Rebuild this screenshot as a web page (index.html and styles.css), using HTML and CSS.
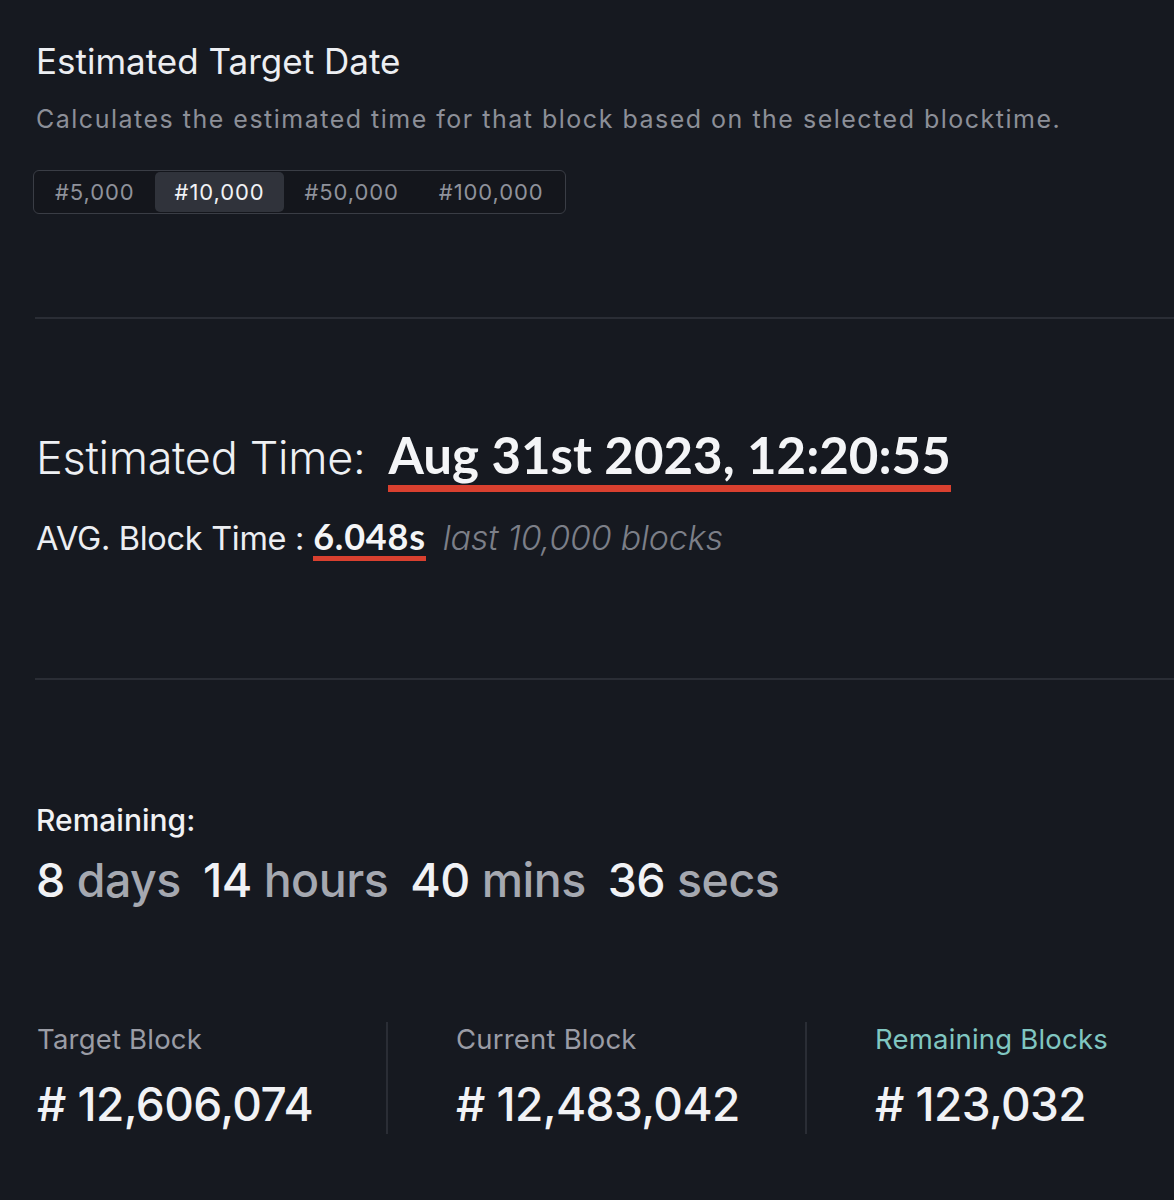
FILE: index.html
```html
<!DOCTYPE html>
<html lang="en">
<head>
<meta charset="utf-8">
<title>Estimated Target Date</title>
<link rel="stylesheet" href="styles.css">
</head>
<body>
<main class="page">
  <section class="intro">
    <h1 class="title">Estimated Target Date</h1>
    <p class="subtitle">Calculates the estimated time for that block based on the selected blocktime.</p>
    <div class="segmented">
      <button class="seg">#5,000</button>
      <button class="seg active">#10,000</button>
      <button class="seg">#50,000</button>
      <button class="seg">#100,000</button>
    </div>
  </section>

  <hr class="divider">

  <section class="estimate">
    <div class="est-line">
      <span class="est-label">Estimated Time:</span>
      <span class="est-date">Aug 31st 2023, 12:20:55</span>
    </div>
    <div class="avg-line">
      <span class="avg-label">AVG. Block Time :</span>
      <span class="avg-value">6.048s</span>
      <span class="avg-note">last 10,000 blocks</span>
    </div>
  </section>

  <hr class="divider">

  <section class="remaining">
    <div class="rem-label">Remaining:</div>
    <div class="rem-values">
      <span class="rem-part"><b>8</b> days</span>
      <span class="rem-part"><b>14</b> hours</span>
      <span class="rem-part"><b>40</b> mins</span>
      <span class="rem-part"><b>36</b> secs</span>
    </div>
  </section>

  <section class="stats">
    <div class="stat">
      <div class="stat-label">Target Block</div>
      <div class="stat-value"># 12,606,074</div>
    </div>
    <div class="stat">
      <div class="stat-label">Current Block</div>
      <div class="stat-value"># 12,483,042</div>
    </div>
    <div class="stat">
      <div class="stat-label teal">Remaining Blocks</div>
      <div class="stat-value"># 123,032</div>
    </div>
  </section>
</main>
</body>
</html>
```

FILE: styles.css
```css
* { box-sizing: border-box; }
html, body {
  margin: 0;
  padding: 0;
  background: #161920;
}
body {
  font-family: Inter, "Noto Sans", sans-serif;
  color: #eceef2;
}
.page {
  padding: 40px 0 0 36px;
  min-height: 1200px;
  overflow: hidden;
}
.title {
  margin: 0;
  font-size: 35px;
  font-weight: 400;
  line-height: 42px;
  color: #eceef2;
}
.subtitle {
  margin: 21px 0 0;
  font-size: 25px;
  line-height: 32px;
  letter-spacing: 1.5px;
  color: #8c8f98;
}
.segmented {
  display: inline-flex;
  margin: 35px 0 0 -3px;
  padding: 1px;
  border: 1px solid #3a3d45;
  border-radius: 6px;
  background: #14161c;
}
.seg {
  font-family: Inter, "Noto Sans", sans-serif;
  font-size: 22px;
  height: 40px;
  padding: 0 20px;
  border: 0;
  border-radius: 5px;
  background: transparent;
  color: #8f929b;
  letter-spacing: 0.9px;
}
.seg.active {
  background: #30333b;
  color: #f1f2f5;
}
.divider {
  border: 0;
  height: 2px;
  background: #2a2d35;
  margin: 103px 0 0 -1px;
}
.estimate {
  padding-top: 106px;
}
.est-line {
  display: flex;
  align-items: baseline;
  gap: 23px;
}
.est-label {
  font-size: 45px;
  font-weight: 300;
  line-height: 60px;
  letter-spacing: -0.3px;
  color: #eef0f3;
}
.est-date {
  font-family: Lato, Inter, sans-serif;
  font-size: 51px;
  font-weight: 700;
  line-height: 60px;
  color: #f4f5f7;
  border-bottom: 7px solid #d9402f;
}
.avg-line {
  display: flex;
  align-items: baseline;
  gap: 9px;
  margin-top: 24px;
}
.avg-label {
  font-size: 32.5px;
  font-weight: 400;
  line-height: 40px;
  letter-spacing: -0.3px;
  color: #eceef2;
}
.avg-value {
  font-family: Lato, Inter, sans-serif;
  font-size: 36px;
  font-weight: 700;
  line-height: 40px;
  letter-spacing: 0.8px;
  color: #f4f5f7;
  border-bottom: 5px solid #d9402f;
}
.avg-note {
  margin-left: 8px;
  font-size: 34px;
  font-style: italic;
  font-weight: 300;
  color: #7c7f88;
  letter-spacing: -0.2px;
}
.estimate + .divider {
  margin-top: 117px;
}
.remaining {
  padding-top: 122px;
}
.rem-label {
  font-size: 30px;
  font-weight: 500;
  line-height: 36px;
  color: #f1f2f5;
}
.rem-values {
  display: flex;
  gap: 22px;
  margin-top: 14px;
  font-size: 46.5px;
  font-weight: 500;
  line-height: 56px;
  letter-spacing: -0.5px;
}
.rem-part {
  color: #a5a8b0;
}
.rem-part b {
  font-weight: 500;
  color: #f1f2f5;
}
.stats {
  display: flex;
  margin-top: 114px;
}
.stat {
  flex: 0 0 419px;
  padding: 0 0 0 68px;
  border-left: 2px solid #2a2d35;
  height: 112px;
}
.stat:first-child {
  flex-basis: 350px;
  padding-left: 1px;
  border-left: 0;
}
.stat-label {
  font-size: 27.5px;
  font-weight: 400;
  line-height: 34px;
  letter-spacing: 0.2px;
  color: #9a9ca5;
}
.stat-label.teal {
  color: #80c6c1;
}
.stat-value {
  margin-top: 20px;
  font-size: 46px;
  font-weight: 500;
  line-height: 56px;
  letter-spacing: -0.6px;
  color: #f1f2f5;
}
```
